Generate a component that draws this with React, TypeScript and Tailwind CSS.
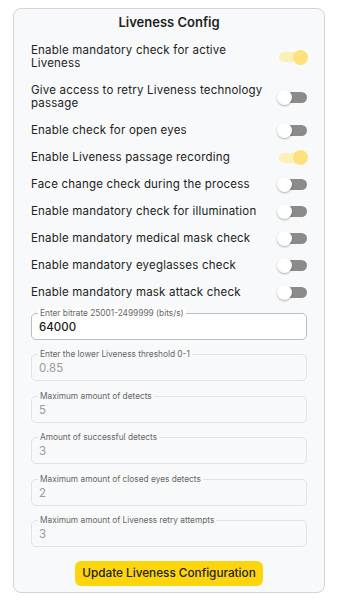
import React from "react";

const toggles: { label: string; on: boolean }[] = [
  { label: "Enable mandatory check for active Liveness", on: true },
  { label: "Give access to retry Liveness technology passage", on: false },
  { label: "Enable check for open eyes", on: false },
  { label: "Enable Liveness passage recording", on: true },
  { label: "Face change check during the process", on: false },
  { label: "Enable mandatory check for illumination", on: false },
  { label: "Enable mandatory medical mask check", on: false },
  { label: "Enable mandatory eyeglasses check", on: false },
  { label: "Enable mandatory mask attack check", on: false },
];

const fields: { label: string; value: string; enabled?: boolean }[] = [
  { label: "Enter bitrate 25001-2499999 (bits/s)", value: "64000", enabled: true },
  { label: "Enter the lower Liveness threshold 0-1", value: "0.85" },
  { label: "Maximum amount of detects", value: "5" },
  { label: "Amount of successful detects", value: "3" },
  { label: "Maximum amount of closed eyes detects", value: "2" },
  { label: "Maximum amount of Liveness retry attempts", value: "3" },
];

function Toggle({ on }: { on: boolean }) {
  return (
    <div className="relative w-[31px] h-[13px] shrink-0">
      <div
        className={
          on
            ? "absolute left-[2px] right-[1px] top-[1.5px] h-[10px] rounded-full bg-[#fbf0b8]"
            : "absolute left-[4px] right-[1px] top-[1px] h-[11px] rounded-full bg-[#8b8b8b]"
        }
      />
      <div
        className={
          on
            ? "absolute right-0 top-[-1px] w-[15px] h-[15px] rounded-full bg-[#fde17c]"
            : "absolute left-0 top-[-1px] w-[15px] h-[15px] rounded-full bg-white shadow-[0_1px_2px_rgba(0,0,0,0.3)]"
        }
      />
    </div>
  );
}

export default function App() {
  return (
    <div
      className="min-h-[606px] bg-white pt-[8px] pl-[13px]"
      style={{ fontFamily: "Inter, 'Liberation Sans', sans-serif" }}
    >
      <div className="w-[312px] rounded-[8px] border border-[#d2d4d8] bg-[#f8f9fa] px-[17px] pb-[6px] flex flex-col">
        <div className="text-center text-[13px] font-semibold text-[#1f1f1f] leading-[20px] mt-[3px] mb-[5px]">
          Liveness Config
        </div>
        <div className="flex flex-col">
          {toggles.map((t) => (
            <div key={t.label} className="flex items-center justify-between py-[7px]">
              <div className="w-[236px] text-[11.5px] tracking-[0.2px] leading-[13px] text-[#222]">{t.label}</div>
              <div className="mr-[-1px]">
                <Toggle on={t.on} />
              </div>
            </div>
          ))}
        </div>
        <div className="flex flex-col gap-[14.5px] mt-[6.5px]">
          {fields.map((f) => (
            <div
              key={f.label}
              className={
                "relative h-[27px] rounded-[5px] border " +
                (f.enabled ? "border-[#bdbdbd] bg-white" : "border-[#e2e3e5] bg-[#f8f9fa]")
              }
            >
              <span
                className={
                  "absolute left-[6px] top-[-6px] px-[2px] text-[8.3px] leading-[10px] text-[#666] " +
                  (f.enabled ? "bg-white" : "bg-[#f8f9fa]")
                }
              >
                {f.label}
              </span>
              <div
                className={
                  "pl-[7px] pt-[5px] text-[11.5px] leading-[16px] " +
                  (f.enabled ? "text-[#1a1a1a] font-medium" : "text-[#9a9a9a]")
                }
              >
                {f.value}
              </div>
            </div>
          ))}
        </div>
        <div className="flex justify-center mt-[14px]">
          <button className="w-[188px] h-[25px] rounded-[6px] bg-[#fdd50c] text-[11.75px] font-medium text-[#222]">
            Update Liveness Configuration
          </button>
        </div>
      </div>
    </div>
  );
}
